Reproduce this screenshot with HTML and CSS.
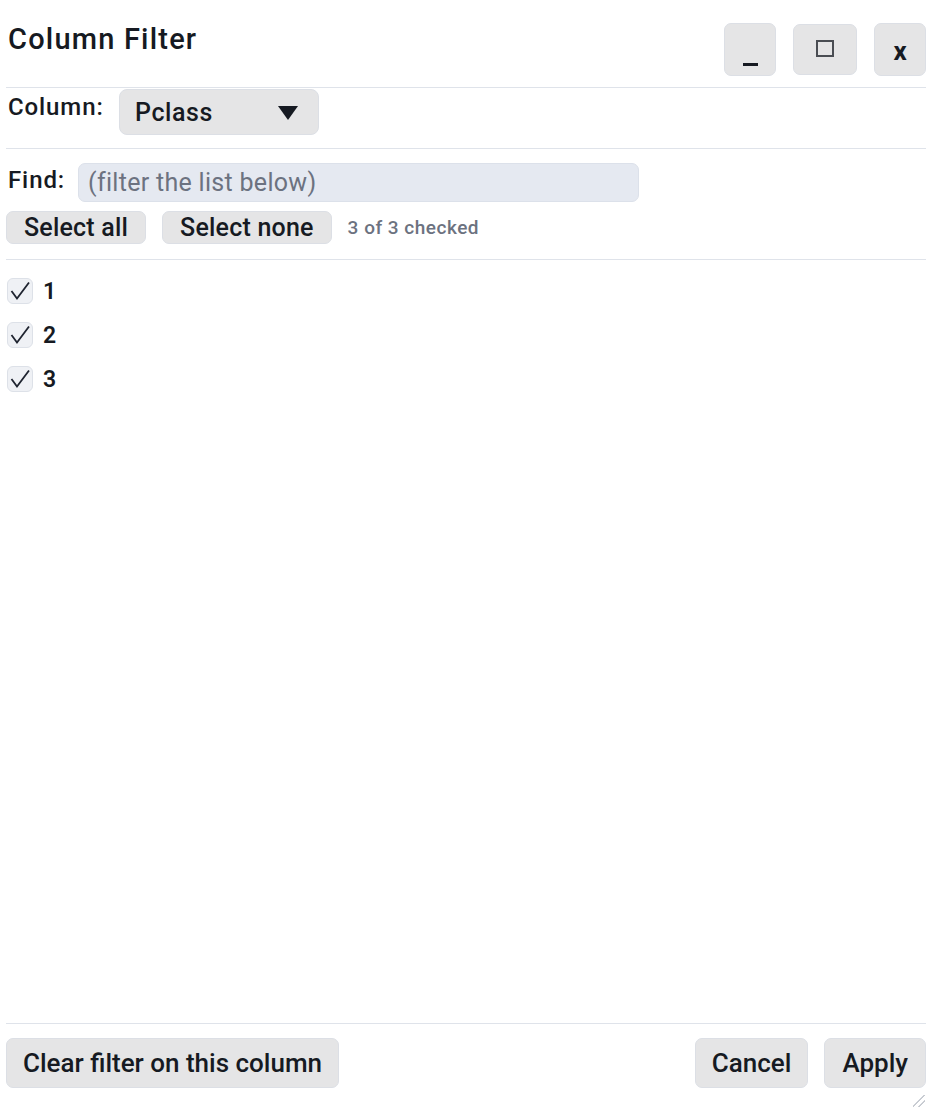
FILE: index.html
```html
<!DOCTYPE html>
<html lang="en">
<head>
  <meta charset="UTF-8" />
  <title>Column Filter</title>
  <meta name="viewport" content="width=device-width, initial-scale=1.0" />
  <link rel="stylesheet" href="styles.css">
</head>
<body>
  <div class="dialog">
    <header class="titlebar">
      <h1>Column Filter</h1>
      <div class="win-btns">
        <button type="button" class="win-btn win-min"><span class="min-bar"></span></button>
        <button type="button" class="win-btn win-max"><span class="max-box"></span></button>
        <button type="button" class="win-btn win-close">x</button>
      </div>
    </header>

    <div class="column-row">
      <label class="field-label">Column:</label>
      <div class="select">
        <span>Pclass</span>
        <svg class="caret" viewBox="0 0 20 14" width="20" height="14"><path d="M0 0 H20 L10 14 Z" fill="#161a22"/></svg>
      </div>
    </div>

    <div class="find-block">
      <div class="find-row">
        <label class="field-label" for="find">Find:</label>
        <input id="find" type="text" placeholder="(filter the list below)">
      </div>
      <div class="select-row">
        <button type="button" class="btn btn-sm">Select all</button>
        <button type="button" class="btn btn-sm">Select none</button>
        <span class="count">3 of 3 checked</span>
      </div>
    </div>

    <ul class="values">
      <li><span class="check"><svg viewBox="0 0 26 26" width="26" height="26"><path d="M4.5 13 L10 20.5 L22 4.5" fill="none" stroke="#1f2430" stroke-width="1.8"/></svg></span>1</li>
      <li><span class="check"><svg viewBox="0 0 26 26" width="26" height="26"><path d="M4.5 13 L10 20.5 L22 4.5" fill="none" stroke="#1f2430" stroke-width="1.8"/></svg></span>2</li>
      <li><span class="check"><svg viewBox="0 0 26 26" width="26" height="26"><path d="M4.5 13 L10 20.5 L22 4.5" fill="none" stroke="#1f2430" stroke-width="1.8"/></svg></span>3</li>
    </ul>

    <footer class="footer">
      <button type="button" class="btn btn-lg">Clear filter on this column</button>
      <div class="footer-right">
        <button type="button" class="btn btn-lg">Cancel</button>
        <button type="button" class="btn btn-lg">Apply</button>
      </div>
    </footer>
    <div class="grip"></div>
  </div>
</body>
</html>
```

FILE: styles.css
```css
* { box-sizing: border-box; }

html, body {
  margin: 0;
  padding: 0;
  height: 100%;
  background: white;
  color: #161a22;
  font-family: Roboto, "Liberation Sans", sans-serif;
  overflow: hidden;
}

.dialog {
  position: relative;
  display: flex;
  flex-direction: column;
  height: 100vh;
  padding-left: 6px;
}

button {
  font-family: inherit;
  color: inherit;
  background: #e5e5e6;
  border: 1px solid #dcdfe5;
  border-radius: 7px;
  cursor: pointer;
  padding: 0;
}

/* title bar */
.titlebar {
  display: flex;
  justify-content: space-between;
  align-items: flex-start;
  height: 88px;
  border-bottom: 1px solid #dfe3ea;
}

.titlebar h1 {
  margin: 23px 0 0 2px;
  font-size: 29px;
  font-weight: 500;
  letter-spacing: 1.2px;
  line-height: 1.17;
}

.win-btns {
  display: flex;
  gap: 17px;
  margin-top: 23px;
}

.win-btn {
  width: 52px;
  height: 53px;
  display: flex;
  justify-content: center;
  align-items: center;
}

.win-min { align-items: flex-end; padding-bottom: 9px; }

.min-bar {
  width: 15px;
  height: 3px;
  background: #161a22;
}

.win-max {
  width: 64px;
  height: 51px;
  margin-top: 1px;
  padding-bottom: 2px;
}

.max-box {
  width: 18px;
  height: 17px;
  border: 2px solid #4a4d53;
}

.win-close {
  padding-top: 2px;
  font-size: 26px;
  font-weight: 700;
}

/* column picker */
.column-row {
  display: flex;
  align-items: flex-start;
  height: 61px;
  border-bottom: 1px solid #dfe3ea;
}

.field-label {
  font-size: 24px;
  font-weight: 500;
  letter-spacing: 0.9px;
}

.column-row .field-label {
  margin: 5px 0 0 2px;
  width: 111px;
}

.select {
  display: flex;
  justify-content: space-between;
  align-items: center;
  width: 200px;
  height: 46px;
  margin-top: 1px;
  padding: 0 20px 0 15px;
  background: #e5e5e6;
  border: 1px solid #dcdfe5;
  border-radius: 8px;
  font-size: 25px;
  font-weight: 500;
  letter-spacing: 0.6px;
}

.caret { margin-top: 2px; }

/* find + select all */
.find-block {
  padding: 14px 0 15px;
  border-bottom: 1px solid #dfe3ea;
}

.find-row {
  display: flex;
  align-items: center;
  gap: 13px;
}

.find-row .field-label { margin: 0 0 5px 2px; }

.find-row input {
  width: 561px;
  height: 39px;
  padding: 0 9px;
  background: #e5e9f1;
  border: 1px solid #dce1ea;
  border-radius: 7px;
  font-family: inherit;
  font-size: 25px;
  letter-spacing: 0.3px;
  color: #161a22;
  outline: none;
}

.find-row input::placeholder { color: #6c7280; }

.select-row {
  display: flex;
  align-items: center;
  gap: 16px;
  margin-top: 9px;
}

.btn-sm {
  height: 33px;
  padding: 0 17px;
  font-size: 25px;
  font-weight: 500;
  letter-spacing: 0.2px;
}

.count {
  font-size: 19px;
  font-weight: 500;
  letter-spacing: 0.5px;
  color: #6c7280;
}

/* value list */
.values {
  flex: 1;
  list-style: none;
  margin: 0;
  padding: 17px 0 0 1px;
}

.values li {
  display: flex;
  align-items: center;
  gap: 10px;
  height: 28px;
  margin-bottom: 16px;
  font-size: 23px;
  font-weight: 600;
}

.check {
  width: 26px;
  height: 26px;
  background: #eff1f5;
  border: 1px solid #dde1e8;
  border-radius: 6px;
  display: flex;
}

.check svg { margin: -1px; }

/* footer */
.footer {
  display: flex;
  justify-content: space-between;
  height: 85px;
  padding-top: 14px;
  border-top: 1px solid #dfe3ea;
}

.footer-right {
  display: flex;
  gap: 16px;
}

.btn-lg {
  height: 50px;
  padding: 0 16px;
  font-size: 26px;
  font-weight: 500;
}

.footer-right .btn-lg { padding: 0 17px; }

.btn-lg:first-child { padding: 0 16px; }

.grip {
  position: absolute;
  right: 1px;
  bottom: 1px;
  width: 12px;
  height: 12px;
  background: linear-gradient(135deg, transparent 45%, #c4c8cf 46%, #c4c8cf 52%, transparent 53%, transparent 70%, #c4c8cf 71%, #c4c8cf 77%, transparent 78%);
}
```
